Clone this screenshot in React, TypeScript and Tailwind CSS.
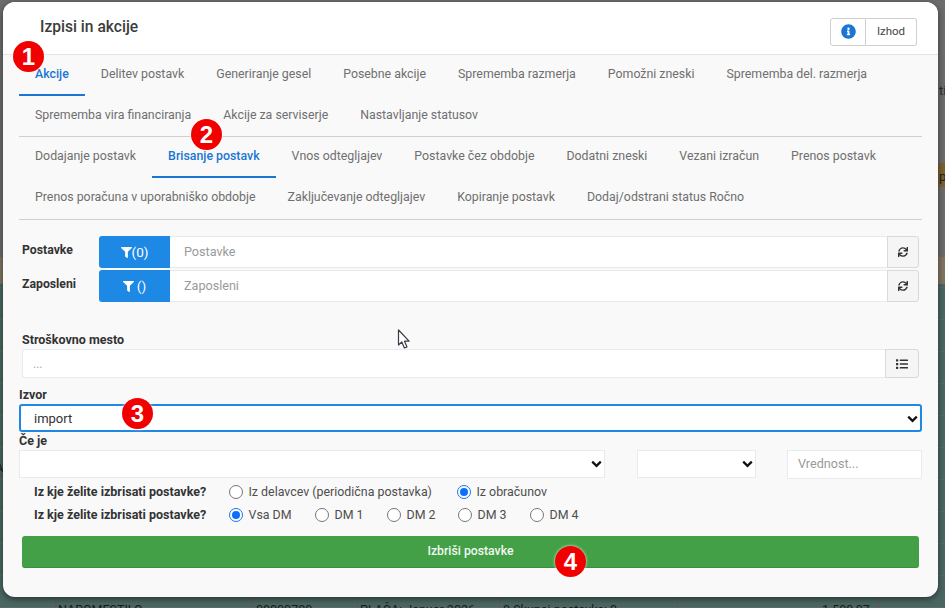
import { FaFilter, FaInfoCircle, FaList, FaSync } from "react-icons/fa";

const font = { fontFamily: "Roboto, sans-serif" };

function Tab({ label, active }: { label: string; active?: boolean }) {
  return (
    <div className="relative px-[16px] pb-[2px] h-[41px] flex items-center">
      <span className={active ? "text-[12.35px] font-medium text-[#1976d2]" : "text-[12.35px] text-[#6f6f6f]"}>{label}</span>
      {active && <div className="absolute left-0 right-0 bottom-0 h-[2.5px] bg-[#1976d2]" />}
    </div>
  );
}

function Badge({ n, className }: { n: string; className: string }) {
  return (
    <div
      className={
        "absolute w-[31px] h-[31px] rounded-full bg-[#f20000] text-white flex items-center justify-center text-[24px] font-bold shadow-[0_0_3px_rgba(255,255,255,0.9)] " +
        className
      }
      style={{ fontFamily: "'Liberation Sans', sans-serif" }}
    >
      {n}
    </div>
  );
}

function Radio({ label, checked }: { label: string; checked?: boolean }) {
  return (
    <label className="flex items-center gap-[5.5px]">
      <span
        className={
          checked
            ? "w-[14px] h-[14px] rounded-full border-[1.5px] border-[#1a73e8] flex items-center justify-center bg-white mb-[2px]"
            : "w-[14px] h-[14px] rounded-full border-[1.5px] border-[#767676] bg-white mb-[2px]"
        }
      >
        {checked && <span className="w-[8px] h-[8px] rounded-full bg-[#0d6efd]" />}
      </span>
      <span className="text-[12.4px] text-[#4e4e4e] leading-none whitespace-nowrap">{label}</span>
    </label>
  );
}

function FilterRow({ label, count, placeholder, mt, gap }: { label: string; count: string; placeholder: string; mt: string; gap: string }) {
  return (
    <div className={"flex ml-[19px] mr-[19px] h-[32px] " + mt}>
      <div className="w-[77px] pt-[5px] text-[12.25px] font-bold text-[#333]">{label}</div>
      <div className={"w-[71px] bg-[#1e88e5] rounded-l-[3px] flex items-center justify-center text-white text-[13.5px] " + gap}>
        <FaFilter size={11} />
        <span>{count}</span>
      </div>
      <div className="flex-1 bg-white border-y-[1.5px] border-[#e6ebf0] px-[14px] flex items-center text-[12.6px] text-[#9a9a9a]">
        {placeholder}
      </div>
      <div className="w-[32px] bg-[#f5f5f5] border border-[#d9d9d9] rounded-r-[3px] flex items-center justify-center text-[#333]">
        <FaSync size={10} />
      </div>
    </div>
  );
}

function Chevron({ className }: { className: string }) {
  return (
    <svg className={className} width="11" height="8" viewBox="0 0 11 8" fill="none">
      <path d="M1.2 1.6 5.5 5.9 9.8 1.6" stroke="#111" strokeWidth="2.2" />
    </svg>
  );
}

export default function App() {
  return (
    <div className="relative w-[945px] h-[608px] overflow-hidden bg-[repeating-linear-gradient(to_bottom,#4b6661_0,#4b6661_31px,#586b67_31px,#586b67_32px)]" style={font}>
      <div className="absolute inset-x-0 top-0 h-[257px] bg-[#6c6c6c]" />
      <div className="absolute right-0 w-[10px] top-[163px] h-[24px] bg-[#7a6130]" />
      <div className="absolute inset-x-0 top-[257px] h-[27px] bg-[#7f7560]" />
      <div className="absolute left-[939px] top-[84px] text-[13px] leading-none text-[#2b2b2b]">ti</div>
      <div className="absolute left-[939px] top-[170px] text-[13px] leading-none text-[#222]">p</div>
      <div className="absolute left-[-5px] top-[461px] text-[13px] leading-none text-[#1a1a1a]">A</div>
      <div className="absolute top-[597px] bottom-0 left-[55px] w-px bg-[#5f5a5a]" />
      <div className="absolute top-[597px] bottom-0 left-[252px] w-px bg-[#5f5a5a]" />
      <div className="absolute top-[597px] bottom-0 left-[357px] w-px bg-[#5f5a5a]" />
      <div className="absolute top-[597px] bottom-0 left-[499px] w-px bg-[#5f5a5a]" />
      <div className="absolute top-[597px] bottom-0 left-[677px] w-px bg-[#5f5a5a]" />
      <div className="absolute top-[597px] bottom-0 left-[878px] w-px bg-[#5f5a5a]" />
      <div className="absolute left-[58px] top-[604px] text-[12.5px] leading-none text-[#161c1b]">NAROMESTILO</div>
      <div className="absolute left-[256px] top-[604px] text-[12.5px] leading-none text-[#161c1b]">00000700</div>
      <div className="absolute left-[360px] top-[604px] text-[12.5px] leading-none text-[#161c1b]">PLAČA: Januar 2026</div>
      <div className="absolute left-[503px] top-[604px] text-[12.5px] leading-none text-[#161c1b]">0 Skupaj postavke: 0</div>
      <div className="absolute left-[822px] top-[604px] text-[12.5px] leading-none text-[#161c1b]">1 500,07</div>

      <div className="relative ml-[3px] mt-[2px] inline-block align-top w-[935px] h-[595px] rounded-[12px] bg-[#f9f9f9] overflow-hidden shadow-[0_2px_6px_rgba(0,0,0,0.5)]">
        <div className="h-[53px] bg-white border-b border-[#e4e4e4] flex items-center justify-between pl-[37px] pr-[21px]">
          <div className="text-[15.6px] font-medium text-[#3c3c3c]">Izpisi in akcije</div>
          <div className="flex mt-[7px]">
            <div className="w-[36px] h-[28px] border-[1.5px] border-[#d0d0d0] rounded-l-[3px] flex items-center justify-center">
              <FaInfoCircle size={15} className="text-[#1976d2]" />
            </div>
            <div className="w-[51px] h-[28px] border-y-[1.5px] border-r-[1.5px] border-[#d0d0d0] rounded-r-[3px] flex items-center justify-center text-[11.5px] text-[#444]">
              Izhod
            </div>
          </div>
        </div>

        <div className="mx-[16px] border-b-[1.5px] border-[#cfcfcf] h-[82px] flex flex-wrap content-start">
          <Tab label="Akcije" active />
          <Tab label="Delitev postavk" />
          <Tab label="Generiranje gesel" />
          <Tab label="Posebne akcije" />
          <Tab label="Sprememba razmerja" />
          <Tab label="Pomožni zneski" />
          <Tab label="Sprememba del. razmerja" />
          <Tab label="Sprememba vira financiranja" />
          <Tab label="Akcije za serviserje" />
          <Tab label="Nastavljanje statusov" />
        </div>
        <div className="mx-[16px] border-b-[1.5px] border-[#cfcfcf] h-[83px] flex flex-wrap content-start">
          <Tab label="Dodajanje postavk" />
          <Tab label="Brisanje postavk" active />
          <Tab label="Vnos odtegljajev" />
          <Tab label="Postavke čez obdobje" />
          <Tab label="Dodatni zneski" />
          <Tab label="Vezani izračun" />
          <Tab label="Prenos postavk" />
          <Tab label="Prenos poračuna v uporabniško obdobje" />
          <Tab label="Zaključevanje odtegljajev" />
          <Tab label="Kopiranje postavk" />
          <Tab label="Dodaj/odstrani status Ročno" />
        </div>

        <FilterRow label="Postavke" count="(0)" placeholder="Postavke" mt="mt-[16px]" gap="gap-0" />
        <FilterRow label="Zaposleni" count="()" placeholder="Zaposleni" mt="mt-[2px]" gap="gap-[3px]" />

        <div className="ml-[19px] mt-[31px] text-[12.5px] font-bold leading-[14px] text-[#333]">Stroškovno mesto</div>
        <div className="flex ml-[19px] mr-[19px] h-[29px] mt-[2px]">
          <div className="flex-1 bg-white border-[1.5px] border-r-0 border-[#e6ebf0] rounded-l-[3px] px-[10px] text-[12px] text-[#aaa] flex items-center">...</div>
          <div className="w-[34px] bg-[#f5f5f5] border border-[#d9d9d9] rounded-r-[3px] flex items-center justify-center text-[#333]">
            <FaList size={12} />
          </div>
        </div>

        <div className="ml-[16px] mt-[10px] text-[12.5px] font-bold leading-[14px] text-[#333]">Izvor</div>
        <div className="relative mx-[16px] mt-[2px] h-[28px] bg-white border-2 border-[#1e88e5] rounded-[3px] pl-[13px] pt-[1px] flex items-center text-[13px] text-[#333]">
          import
          <Chevron className="absolute right-[2px] top-[9px]" />
        </div>

        <div className="ml-[16px] mt-[2px] text-[12.5px] font-bold leading-[14px] text-[#333]">Če je</div>
        <div className="flex mx-[16px] mt-[2px]">
          <div className="relative w-[586px] h-[28px] bg-white border-[1.5px] border-[#e6ebf0]">
            <Chevron className="absolute right-[2px] top-[9px]" />
          </div>
          <div className="relative ml-[32px] w-[119px] h-[28px] bg-white border-[1.5px] border-[#e6ebf0]">
            <Chevron className="absolute right-[2px] top-[9px]" />
          </div>
          <div className="ml-[31px] w-[135px] h-[29px] bg-white border-[1.5px] border-[#e6ebf0] px-[10px] flex items-center text-[12.6px] text-[#9a9a9a]">
            Vrednost...
          </div>
        </div>

        <div className="flex items-center ml-[31px] mt-[2px] h-[23px]">
          <div className="w-[195px] text-[12.5px] font-bold text-[#333]">Iz kje želite izbrisati postavke?</div>
          <div className="w-[228px]"><Radio label="Iz delavcev (periodična postavka)" /></div>
          <Radio label="Iz obračunov" checked />
        </div>
        <div className="flex items-center ml-[31px] h-[23px]">
          <div className="w-[195px] text-[12.5px] font-bold text-[#333]">Iz kje želite izbrisati postavke?</div>
          <div className="w-[86px]"><Radio label="Vsa DM" checked /></div>
          <div className="w-[72px]"><Radio label="DM 1" /></div>
          <div className="w-[71px]"><Radio label="DM 2" /></div>
          <div className="w-[72px]"><Radio label="DM 3" /></div>
          <Radio label="DM 4" />
        </div>

        <div className="mx-[19px] mt-[9px] h-[32px] bg-[#43a047] border-b border-[#3b8f40] rounded-[3px] flex items-center justify-center text-[12.25px] font-medium text-[#f2f8f2]">
          Izbriši postavke
        </div>
      </div>

      <Badge n="1" className="left-[13px] top-[41px]" />
      <Badge n="2" className="left-[191px] top-[119px]" />
      <Badge n="3" className="left-[122px] top-[398px]" />
      <Badge n="4" className="left-[555px] top-[546px]" />

      <svg className="absolute left-[397px] top-[329px]" width="15" height="21" viewBox="0 0 15 21" fill="none">
        <path d="M1.5 1v15l3.3-3 2.6 6 2.6-1-2.5-5.8h4.6z" fill="#fff" stroke="#3a3a4a" strokeWidth="1.2" strokeLinejoin="round" />
      </svg>
    </div>
  );
}
